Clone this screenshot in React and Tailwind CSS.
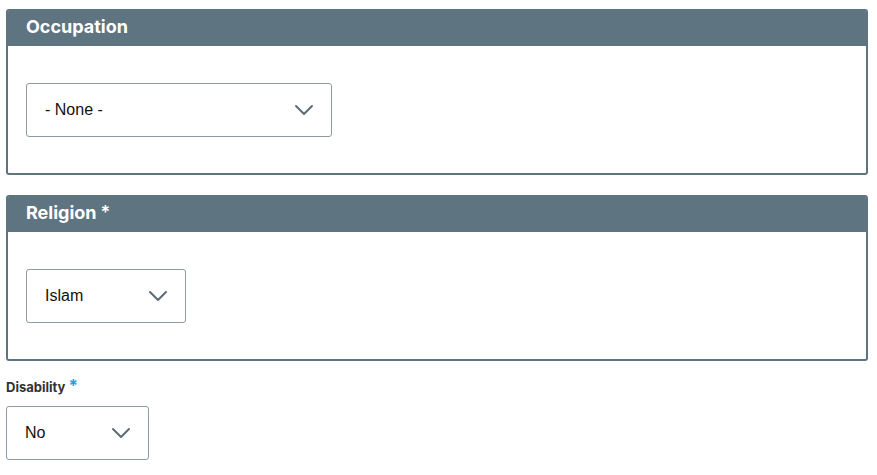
import React from 'react';

const Chevron = () => (
  <svg width="20" height="12" viewBox="0 0 20 12" fill="none" className="text-[#5b6c78]">
    <path d="M2 2l8 8 8-8" stroke="currentColor" strokeWidth="2" strokeLinecap="round" strokeLinejoin="round" />
  </svg>
);

const Select = ({ value, width }) => (
  <div
    className={`flex h-[54px] items-center justify-between rounded-[3px] border border-[#8c9ba6] bg-white pl-[18px] pr-[17px] ${width}`}
  >
    <span className="text-[16px] text-[#111]" style={{ fontFamily: '"Liberation Sans", Arial, sans-serif' }}>
      {value}
    </span>
    <Chevron />
  </div>
);

const Card = ({ title, required, children }) => (
  <section className="overflow-hidden rounded-[3px] border-2 border-[#5f7481] bg-white">
    <header className="flex h-[35px] items-center bg-[#5f7481] px-[18px] pb-[4px]">
      <h2 className="text-[18px] font-bold text-white" style={{ fontFamily: 'Inter, "Noto Sans", sans-serif' }}>
        {title}
        {required && <span className="ml-1 font-semibold">*</span>}
      </h2>
    </header>
    <div className="px-[18px] pt-[37px] pb-[36px]">{children}</div>
  </section>
);

export default function App() {
  return (
    <div className="min-h-screen bg-white px-[6px] pt-[9px]" style={{ fontFamily: 'Inter, "Noto Sans", sans-serif' }}>
      <div className="flex w-[862px] flex-col gap-[20px]">
        <Card title="Occupation">
          <Select value="- None -" width="w-[306px]" />
        </Card>
        <Card title="Religion" required>
          <Select value="Islam" width="w-[160px]" />
        </Card>
      </div>
      <div className="mt-[15px]">
        <label className="block text-[13px] font-bold leading-[20px] text-[#333]">
          Disability <span className="text-[17px] text-[#2e9ae0]">*</span>
        </label>
        <div className="mt-[9px]">
          <Select value="No" width="w-[143px]" />
        </div>
      </div>
    </div>
  );
}
